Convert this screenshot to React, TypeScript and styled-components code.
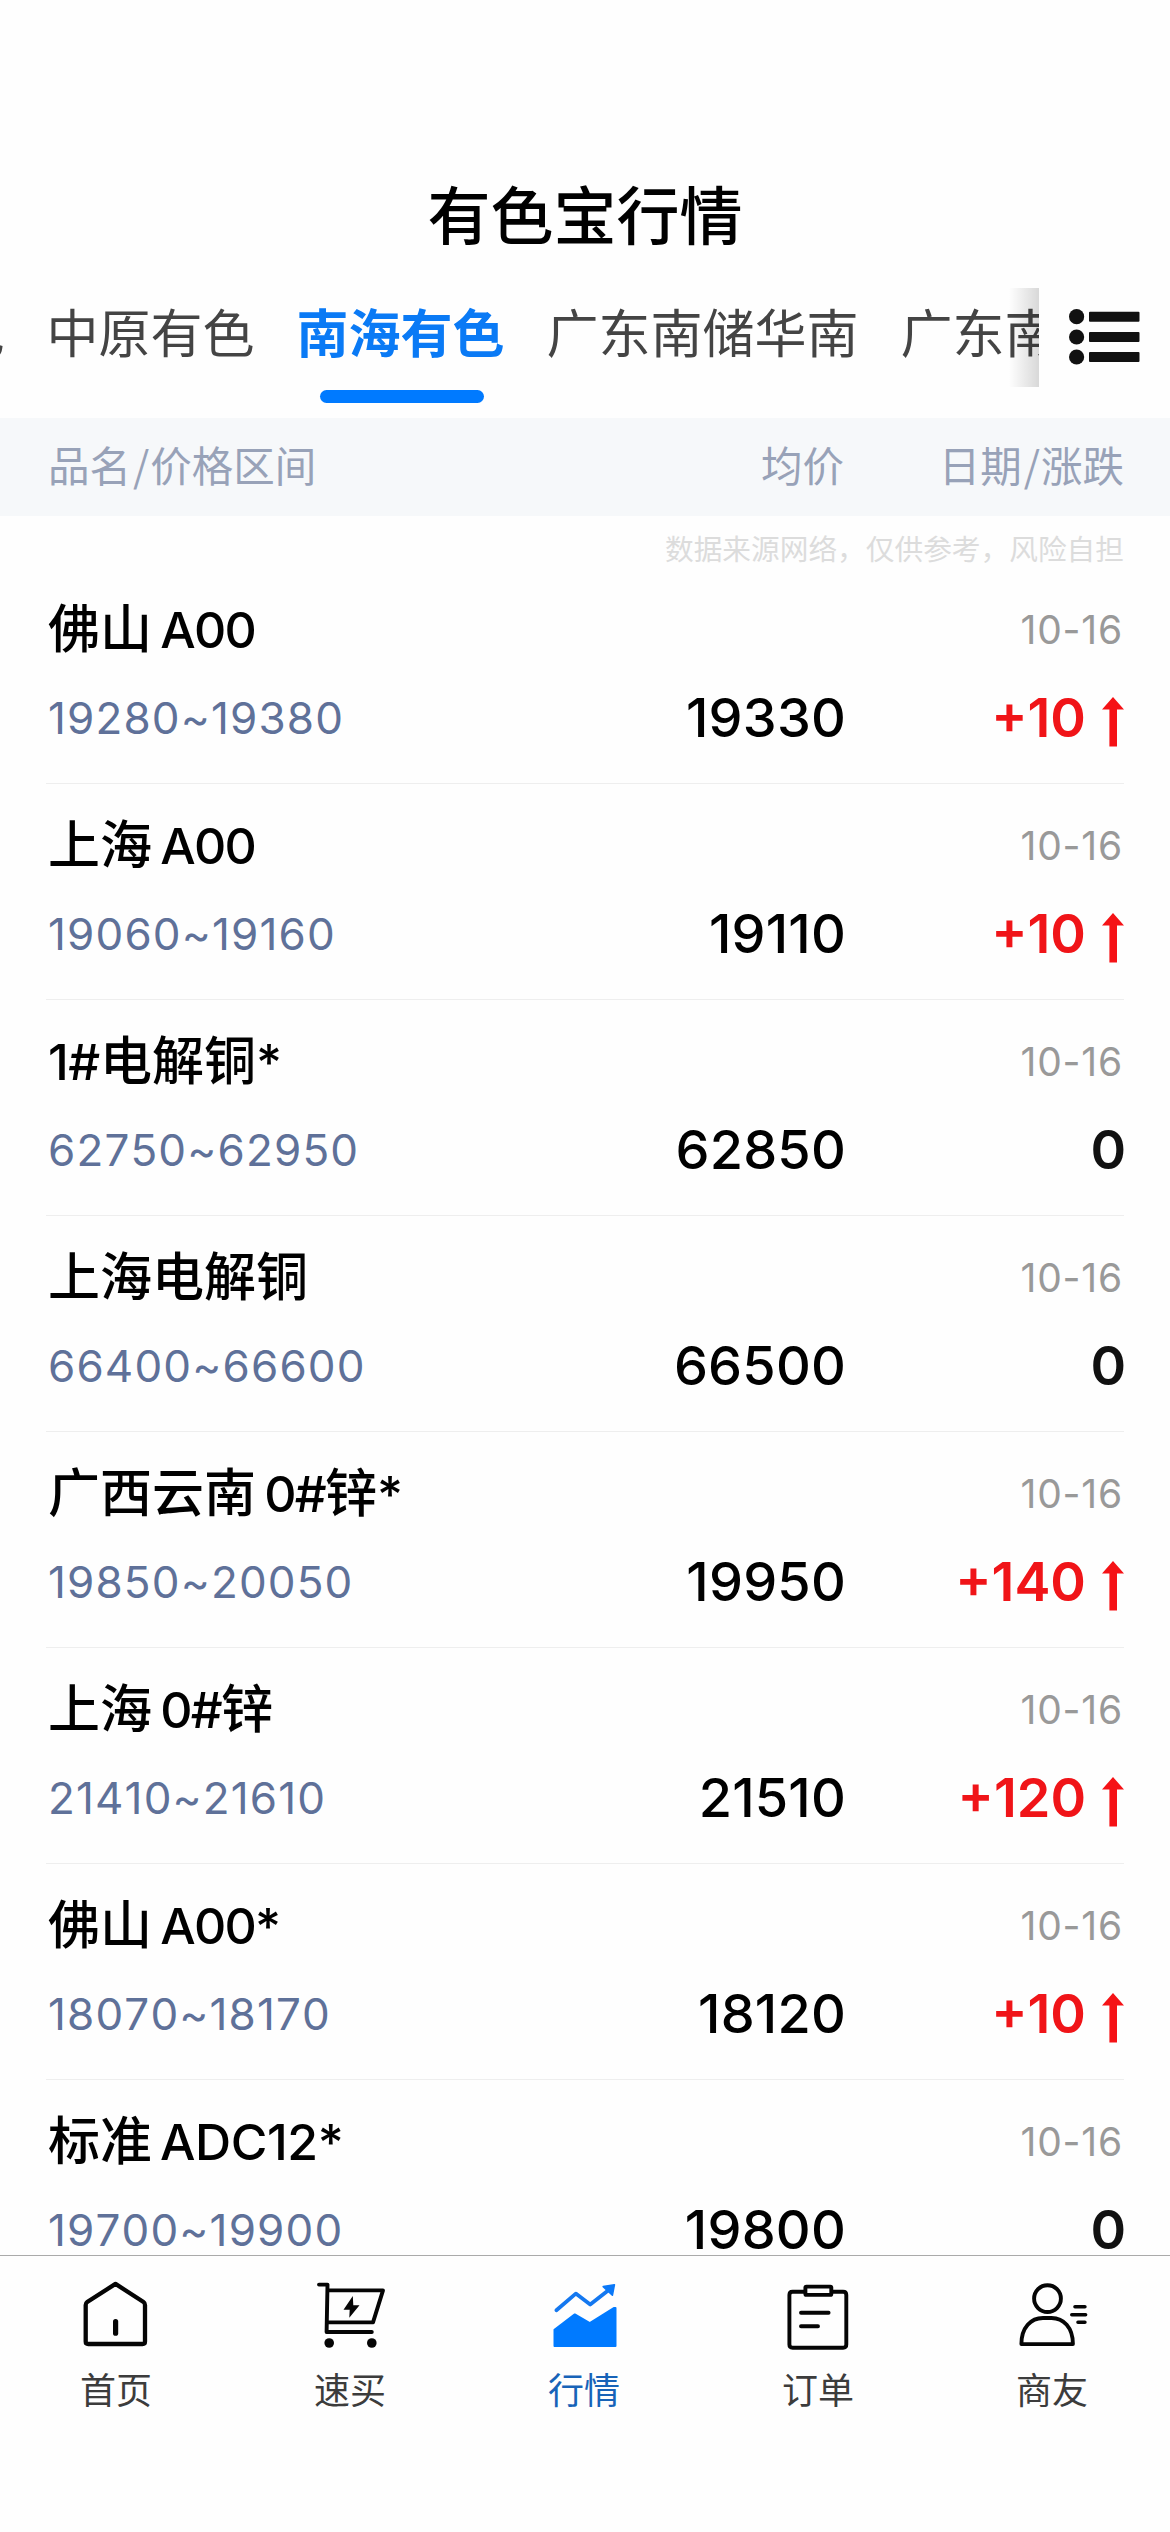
import React from "react";
import styled, { createGlobalStyle } from "styled-components";

const GlobalStyle = createGlobalStyle`
  * { box-sizing: border-box; }
  html, body { margin: 0; padding: 0; background: #fefefe; }
  body {
    font-family: "Inter", "Noto Sans CJK SC", sans-serif;
    font-kerning: none;
    overflow: hidden;
  }
`;

const Page = styled.div`
  width: 1170px;
  height: 2532px;
  display: flex;
  flex-direction: column;
  background: #fefefe;
  color: #000;
  overflow: hidden;
`;

const TitleBar = styled.header`
  height: 288px;
  flex: none;
  padding-top: 168px;
  text-align: center;
`;

const Title = styled.h1`
  margin: 0;
  font-size: 63px;
  line-height: 96px;
  font-weight: 500;
`;

const CategoryBar = styled.nav`
  height: 130px;
  flex: none;
  display: flex;
`;

const CategoryScroller = styled.div`
  position: relative;
  width: 1039px;
  height: 130px;
  display: flex;
  justify-content: flex-start;
  gap: 42px;
  overflow: hidden;
`;

const Category = styled.div<{ $active?: boolean; $first?: boolean }>`
  flex: none;
  height: 115px;
  margin-left: ${(p) => (p.$first ? "-203.5px" : "0")};
  display: flex;
  flex-direction: column;
  align-items: center;
  justify-content: space-between;
  font-size: 52px;
  line-height: 94px;
  white-space: nowrap;
  font-weight: ${(p) => (p.$active ? 700 : 400)};
  color: ${(p) => (p.$active ? "#0a7af5" : "#444")};
`;

const Underline = styled.i`
  width: 164px;
  height: 13px;
  margin-left: 3px;
  border-radius: 7px;
  background: #007aff;
`;

const EdgeShade = styled.div`
  position: absolute;
  right: 0;
  top: 0;
  width: 30px;
  height: 99px;
  background: linear-gradient(to right, rgba(0, 0, 0, 0), rgba(0, 0, 0, 0.15));
`;

const MenuButton = styled.div`
  flex: 1;
  padding: 18px 0 0 28px;
  svg { display: block; }
`;

const ColumnHeader = styled.div`
  height: 98px;
  flex: none;
  display: grid;
  grid-template-columns: 400px 396px 280px;
  padding: 0 46px 6px 48px;
  align-items: center;
  background: #f6f8fa;
  color: #98a2b8;
  font-size: 41.5px;
  line-height: 60px;
  font-family: "Noto Sans CJK SC", sans-serif;
  font-weight: 400;
`;

const Cell = styled.div<{ $end?: boolean }>`
  text-align: ${(p) => (p.$end ? "right" : "left")};
  white-space: nowrap;
`;

const Slash = styled.span`
  padding: 0 1px 0 2px;
`;

const Disclaimer = styled.p`
  margin: 0;
  height: 52px;
  flex: none;
  padding: 13px 46px 0;
  text-align: right;
  color: #dcdcdc;
  font-size: 28.7px;
  line-height: 42px;
`;

const List = styled.main`
  flex: 1;
  min-height: 0;
  overflow: hidden;
`;

const Row = styled.section`
  height: 216px;
  margin: 0 46px;
  padding: 18px 0 0 2px;
  border-bottom: 1px solid #eee;
  display: grid;
  grid-template-columns: 400px 396px 280px;
  grid-template-rows: 88px 88px;
  align-items: center;
  white-space: nowrap;
`;

const Name = styled.h2`
  grid-column: span 2;
  margin: 0;
  font-size: 52px;
  line-height: 88px;
  font-weight: 500;
`;

const Latin = styled.span<{ $tight: boolean }>`
  font-size: 50px;
  letter-spacing: ${(p) => (p.$tight ? "-1.8px" : "-0.4px")};
  word-spacing: ${(p) => (p.$tight ? "-3.2px" : "-5px")};
`;

const DateText = styled.time`
  text-align: right;
  padding-right: 1px;
  font-size: 39px;
  line-height: 88px;
  letter-spacing: 0.8px;
  color: #999;
`;

const Range = styled.span`
  font-size: 44px;
  line-height: 88px;
  letter-spacing: 1.15px;
  color: #5f7199;
`;

const Price = styled.span`
  margin-right: -2px;
  text-align: right;
  font-size: 54px;
  line-height: 88px;
  letter-spacing: 0.2px;
  font-weight: 500;
`;

const Change = styled.span<{ $up: boolean }>`
  display: flex;
  justify-content: flex-end;
  align-items: center;
  gap: 16px;
  margin-right: ${(p) => (p.$up ? "0" : "-2px")};
  font-size: 54px;
  line-height: 88px;
  font-weight: 600;
  color: ${(p) => (p.$up ? "#f01418" : "#111")};
`;

const ArrowIcon = styled.svg`
  flex: none;
  margin-top: 7px;
`;

const TabBar = styled.footer`
  height: 277px;
  flex: none;
  padding-top: 22px;
  border-top: 1px solid #aaa;
  display: flex;
`;

const Tab = styled.div<{ $active?: boolean }>`
  width: 234px;
  padding-right: 2px;
  display: flex;
  flex-direction: column;
  align-items: center;
  color: ${(p) => (p.$active ? "#1763b8" : "#3c3c3c")};
  font-size: 36px;
  line-height: 54px;
  svg { display: block; margin-bottom: 8px; }
`;

const IconSvg = ({ children }: { children: React.ReactNode }) => (
  <svg width="75" height="78" viewBox="-1 0 75 78" fill="none" stroke="#050505" strokeWidth="3.9" strokeLinecap="round" strokeLinejoin="round">
    {children}
  </svg>
);

const HomeIcon = () => (
  <IconSvg>
    <path strokeWidth="4.3" d="M35.5 5.9 L63.5 24 Q65 25 65 27 V63.5 Q65 66 62.5 66 H8.2 Q5.7 66 5.7 63.5 V27 Q5.7 25 7.2 24 Z" />
    <path strokeWidth="5.2" d="M35.6 43.6 V55.2" />
  </IconSvg>
);

const CartIcon = () => (
  <IconSvg>
    <path d="M5 6.6 H13.5 L12.6 54 H57.8" />
    <path d="M14 12.4 H69 L59 44.4 H14" />
    <circle cx="15.2" cy="65" r="4.8" fill="#050505" stroke="none" />
    <circle cx="57.8" cy="65" r="4.8" fill="#050505" stroke="none" />
    <path d="M38.8 18 L29.5 31.7 H35.7 L35.3 39.7 L45.5 27.3 H39.3 Z" fill="#050505" stroke="none" />
  </IconSvg>
);

const MarketIcon = () => (
  <IconSvg>
    <path stroke="#1478f0" strokeWidth="3.8" d="M8.4 32.2 L27.8 15.6 L42.2 26.6 L62 11" />
    <path fill="#0a78f8" stroke="#0a78f8" strokeWidth="1.6" d="M66.4 6.8 L55.2 8.6 L64.4 17.2 Z" />
    <path fill="#007aff" stroke="#007aff" strokeWidth="2" d="M6.5 51.8 L26.8 36.4 L41.8 45.2 L65.8 30 H67.5 V68 H6.5 Z" />
  </IconSvg>
);

const OrderIcon = () => (
  <IconSvg>
    <path d="M22 13.7 H10.6 Q7.4 13.7 7.4 16.9 V66.5 Q7.4 69.7 10.6 69.7 H61.1 Q64.3 69.7 64.3 66.5 V16.9 Q64.3 13.7 61.1 13.7 H50" />
    <rect x="23.4" y="8.6" width="25.9" height="8.3" rx="1" />
    <path d="M19 34.7 H46.6 M19 48.3 H36" />
  </IconSvg>
);

const FriendIcon = () => (
  <IconSvg>
    <circle cx="31.5" cy="20.6" r="13.4" />
    <path d="M5.4 66.1 C5.4 49.5 15 40 27 40 H35.5 C47.5 40 56.9 49.5 56.9 66.1 Z" />
    <path strokeWidth="3.6" d="M59 28.7 H68.9 M55.8 36.7 H69.6 M62 44.3 H68.9" />
  </IconSvg>
);

const UpArrow = () => (
  <ArrowIcon width="22" height="50" viewBox="0 0 22 50" fill="#f51216">
    <path d="M11 0 L22 12.5 H15 V49.5 H7.4 V12.5 H0 Z" />
  </ArrowIcon>
);

const MixedName = ({ text }: { text: string }) => (
  <Name>
    {text.split(/([ -~]+)/).map((run, i) =>
      i % 2 ? (
        <Latin key={i} $tight={run.includes("0")}>{run}</Latin>
      ) : (
        run
      )
    )}
  </Name>
);

type Quote = { name: string; range: string; price: string; change: string };

const quotes: Quote[] = [
  { name: "佛山 A00", range: "19280~19380", price: "19330", change: "+10" },
  { name: "上海 A00", range: "19060~19160", price: "19110", change: "+10" },
  { name: "1#电解铜*", range: "62750~62950", price: "62850", change: "0" },
  { name: "上海电解铜", range: "66400~66600", price: "66500", change: "0" },
  { name: "广西云南 0#锌*", range: "19850~20050", price: "19950", change: "+140" },
  { name: "上海 0#锌", range: "21410~21610", price: "21510", change: "+120" },
  { name: "佛山 A00*", range: "18070~18170", price: "18120", change: "+10" },
  { name: "标准 ADC12*", range: "19700~19900", price: "19800", change: "0" },
];

const categories = ["长江有色", "中原有色", "南海有色", "广东南储华南", "广东南储"];

const tabs = [
  { label: "首页", Icon: HomeIcon },
  { label: "速买", Icon: CartIcon },
  { label: "行情", Icon: MarketIcon },
  { label: "订单", Icon: OrderIcon },
  { label: "商友", Icon: FriendIcon },
];

export default function App() {
  return (
    <Page>
      <GlobalStyle />
      <TitleBar>
        <Title>有色宝行情</Title>
      </TitleBar>
      <CategoryBar>
        <CategoryScroller>
          {categories.map((c, i) => (
            <Category key={c} $first={i === 0} $active={c === "南海有色"}>
              {c}
              {c === "南海有色" && <Underline />}
            </Category>
          ))}
          <EdgeShade />
        </CategoryScroller>
        <MenuButton>
          <svg width="76" height="62" viewBox="0 0 76 62" fill="#111">
            {[10.7, 31, 51].map((y) => (
              <g key={y}>
                <circle cx="9.6" cy={y} r="7.6" />
                <rect x="22" y={y - 5} width="50.5" height="10" rx="1" />
              </g>
            ))}
          </svg>
        </MenuButton>
      </CategoryBar>
      <ColumnHeader>
        <Cell>品名<Slash>/</Slash>价格区间</Cell>
        <Cell $end>均价</Cell>
        <Cell $end>日期<Slash>/</Slash>涨跌</Cell>
      </ColumnHeader>
      <Disclaimer>数据来源网络，仅供参考，风险自担</Disclaimer>
      <List>
        {quotes.map((q) => {
          const up = q.change.startsWith("+");
          return (
            <Row key={q.name}>
              <MixedName text={q.name} />
              <DateText>10-16</DateText>
              <Range>{q.range}</Range>
              <Price>{q.price}</Price>
              <Change $up={up}>
                {q.change}
                {up && <UpArrow />}
              </Change>
            </Row>
          );
        })}
      </List>
      <TabBar>
        {tabs.map(({ label, Icon }) => (
          <Tab key={label} $active={label === "行情"}>
            <Icon />
            {label}
          </Tab>
        ))}
      </TabBar>
    </Page>
  );
}
